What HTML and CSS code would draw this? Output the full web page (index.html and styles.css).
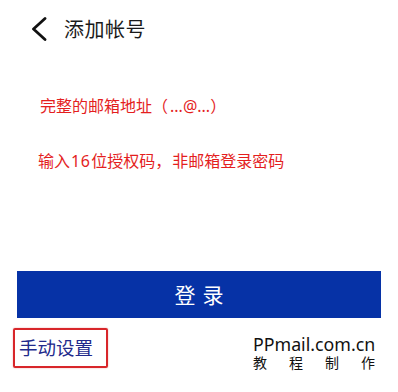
FILE: index.html
```html
<!DOCTYPE html>
<html lang="zh-CN">
<head>
<meta charset="utf-8">
<link rel="stylesheet" href="styles.css">
</head>
<body>
<div class="page">
  <header class="header">
    <svg class="back" width="16" height="24" viewBox="0 0 16 24">
      <polyline points="14,1.5 2.5,12 14,22.5" fill="none" stroke="#111" stroke-width="2.8" stroke-linecap="round" stroke-linejoin="round"/>
    </svg>
    <span class="title">添加帐号</span>
  </header>
  <div class="hints">
    <p class="hint hint1">完整的邮箱地址<span class="pl">（</span><span class="latin">...@...</span><span class="pr">）</span></p>
    <p class="hint hint2">输入<span class="digits">16</span>位授权码<span class="pc">，</span>非邮箱登录密码</p>
  </div>
  <button class="login"><span>登</span><span>录</span></button>
  <div class="footer">
    <div class="manual">手动设置</div>
    <div class="credit">
      <div class="site">PPmail.com.cn</div>
      <div class="made"><span>教</span><span>程</span><span>制</span><span>作</span></div>
    </div>
  </div>
</div>
</body>
</html>
```
FILE: styles.css
```css
html, body {
  margin: 0;
  padding: 0;
  background: #fff;
}
.page {
  width: 398px;
  height: 392px;
  font-family: "Noto Sans", "Noto Sans CJK SC", sans-serif;
  color: #111;
  overflow: hidden;
}
.header {
  height: 58px;
  display: flex;
  align-items: center;
  padding-left: 31px;
}
.back {
  display: block;
}
.title {
  margin-left: 17px;
  font-family: "Noto Sans CJK SC", sans-serif;
  font-size: 20px;
  letter-spacing: 0.5px;
  line-height: 24px;
  color: #1a1a1a;
}
.hints {
  padding-top: 35px;
  height: 178px;
  box-sizing: border-box;
}
.hint {
  margin: 0;
  font-family: "Noto Sans CJK SC", sans-serif;
  font-size: 16px;
  line-height: 24px;
  color: #e41e1e;
  font-feature-settings: "chws" 0, "halt" 0;
}
.hint1 {
  padding-left: 40px;
}
.hint2 {
  margin-top: 30px;
  padding-left: 38px;
}
.pl {
  display: inline-block;
  width: 14px;
  text-align: right;
  white-space: nowrap;
}
.pr {
  display: inline-block;
  width: 16px;
  text-align: left;
}
.latin {
  font-family: "Noto Sans", sans-serif;
  padding: 0 0 0 4px;
}
.pc {
  display: inline-block;
  width: 17px;
  text-align: left;
}
.digits {
  font-family: "Noto Sans", sans-serif;
  letter-spacing: 0.5px;
  padding: 0 1px;
}
.login {
  display: flex;
  justify-content: center;
  gap: 7px;
  margin: 35px 0 0 17px;
  width: 364px;
  height: 47px;
  border: 0;
  padding: 0;
  background: #0632a6;
  color: #fff;
  font-family: "Noto Sans CJK SC", sans-serif;
  font-size: 21px;
  line-height: 47px;
  align-items: center;
}
.footer {
  display: flex;
  justify-content: space-between;
  align-items: flex-start;
  margin-top: 10px;
  padding: 0 23px 0 13px;
}
.manual {
  width: 95px;
  height: 40px;
  box-sizing: border-box;
  border: 2.5px solid #d8262a;
  border-radius: 2px;
  box-shadow: 0 0 1.5px rgba(216, 38, 42, 0.5);
  font-family: "Noto Sans CJK SC", sans-serif;
  font-size: 18.5px;
  line-height: 35px;
  padding-left: 4px;
  color: #222a8c;
}
.credit {
  margin-top: 8px;
  width: 122px;
}
.site {
  font-size: 17.8px;
  line-height: 17px;
  color: #111;
}
.made {
  display: flex;
  justify-content: space-between;
  margin-top: 2px;
  font-family: "Noto Sans CJK SC", sans-serif;
  font-size: 14px;
  line-height: 14px;
  color: #111;
}
```
